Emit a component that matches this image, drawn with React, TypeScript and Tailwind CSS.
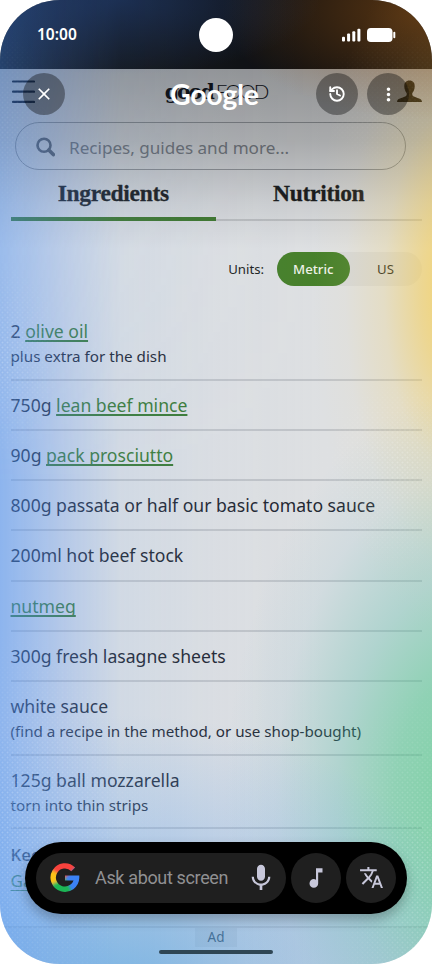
import { History } from 'lucide-react';
import { MdClose, MdMic, MdMoreVert, MdMusicNote, MdTranslate } from 'react-icons/md';
import { clsx } from 'clsx';

interface Ingredient {
  amount?: string;
  link?: string;
  text?: string;
  note?: string;
}

const ingredients: Ingredient[] = [
  { amount: '2', link: 'olive oil', note: 'plus extra for the dish' },
  { amount: '750g', link: 'lean beef mince' },
  { amount: '90g', link: 'pack prosciutto' },
  { text: '800g passata or half our basic tomato sauce' },
  { text: '200ml hot beef stock' },
  { link: 'nutmeg' },
  { text: '300g fresh lasagne sheets' },
  { text: 'white sauce', note: '(find a recipe in the method, or use shop-bought)' },
  { text: '125g ball mozzarella', note: 'torn into thin strips' },
];

function StatusBar() {
  return (
    <div className="flex h-[69px] shrink-0 items-center justify-between bg-[#0d0e10] pr-[36px] pl-[37px]">
      <span className="relative z-10 w-[69px] text-[15.5px] font-semibold text-white">10:00</span>
      <div className="relative z-10 h-[34px] w-[34px] rounded-full bg-white" />
      <div className="relative z-10 flex w-[71px] items-center justify-end gap-[6px]">
        <svg width="19" height="14" viewBox="0 0 19 14" fill="#fff">
          <rect x="0" y="8.8" width="3" height="4.7" rx="1" />
          <rect x="5.1" y="5.6" width="3" height="7.9" rx="1" />
          <rect x="10.3" y="3.3" width="3" height="10.2" rx="1" />
          <rect x="15.4" y="0.8" width="3" height="12.7" rx="1" />
        </svg>
        <svg width="29" height="14" viewBox="0 0 29 14" fill="#fff">
          <rect x="0" y="0" width="25.5" height="14" rx="3.8" />
          <rect x="26.3" y="3.8" width="2" height="6.4" rx="1" />
        </svg>
      </div>
    </div>
  );
}

function SiteHeader() {
  return (
    <header className="flex h-[53px] items-start justify-between pt-[10px] pr-[10px] pl-[12px]">
      <svg width="23" height="25" viewBox="0 0 23 25" stroke="#0c1424" strokeWidth="2.2" strokeLinecap="round">
        <path d="M1 2.5H22M1 12.7H22M1 22.9H22" />
      </svg>
      <div className="mt-[-2px] flex items-baseline leading-[28px] text-[#0c0e14]">
        <span className="font-['DejaVu_Serif'] text-[20.5px] font-bold tracking-[-2px]">good</span>
        <span className="ml-[3px] font-[Lato] text-[20.5px] font-light tracking-[-2px]">FOOD</span>
      </div>
      <svg width="25" height="23" viewBox="0 0 25 23" className="mt-px" fill="#262010">
        <path d="M12.5 0.5C16 0.5 18 3 17.7 6.5C17.6 9.5 16.4 12 15.3 13.2C15 15 15.6 16 17.5 16.8L22 18.4C24 19.1 24.8 20 25 22H0C0.2 20 1 19.1 3 18.4L7.5 16.8C9.4 16 10 15 9.7 13.2C8.6 12 7.4 9.5 7.3 6.5C7 3 9 0.5 12.5 0.5Z" />
      </svg>
    </header>
  );
}

function SearchField() {
  return (
    <div className="mr-[26px] ml-[15px] flex h-[48px] items-center rounded-full border border-[#989ca0] pl-[20px]">
      <svg width="19" height="20" viewBox="0 0 19 20" fill="none" stroke="#60666e" className="mt-px">
        <circle cx="8" cy="8.2" r="6.5" strokeWidth="2.6" />
        <path d="M12.8 13L17.3 17.6" strokeWidth="3.6" strokeLinecap="round" />
      </svg>
      <span className="mt-[3px] ml-[14px] text-[17.1px] text-[#7c8187]">Recipes, guides and more...</span>
    </div>
  );
}

function Tabs() {
  return (
    <div className="flex h-[50.5px] font-['Liberation_Serif',serif] text-[23.5px] leading-[47px] font-bold tracking-[-0.3px] text-[#1c1e20] [-webkit-text-stroke:0.3px_#1c1e20]">
      <div className="w-[205.5px] border-b-4 border-[#3f7a2c] text-center">Ingredients</div>
      <div className="flex-1 border-b-2 border-[#c1c3c5] text-center">Nutrition</div>
    </div>
  );
}

function UnitToggle() {
  return (
    <div className="mt-[31.5px] flex items-center justify-end text-[13.2px] text-[#1c1e20]">
      <span className="mt-px mr-[13px]">Units:</span>
      <div className="flex h-[34px] w-[144.5px] rounded-full bg-black/4 leading-[34px]">
        <span className="w-[72.5px] rounded-full bg-[#47802b] text-center font-medium text-[#eef2e8]">Metric</span>
        <span className="flex-1 text-center">US</span>
      </div>
    </div>
  );
}

function IngredientRow({ item, first }: { item: Ingredient; first?: boolean }) {
  return (
    <li className={clsx('border-b-2 border-[#c1c4c8] pt-[12px]', item.note ? 'h-[73.5px]' : 'h-[50.3px]', first && 'mt-[21px]')}>
      <p className="text-[17.6px] leading-[25px]">
        {item.amount && <span>{item.amount} </span>}
        {item.link && (
          <a className="text-[#3a7a30] underline decoration-[1.5px] underline-offset-[2px] [text-decoration-skip-ink:none]">{item.link}</a>
        )}
        {item.text}
      </p>
      {item.note && <p className="text-[15.2px] leading-[25px]">{item.note}</p>}
    </li>
  );
}

function Glow() {
  return (
    <div className="pointer-events-none absolute inset-0">
      {/* dark scrim behind the top controls */}
      <div className="absolute inset-x-0 top-[69px] h-[180px] bg-[linear-gradient(to_bottom,rgba(0,0,0,.34),rgba(0,0,0,.24)_40%,rgba(0,0,0,.08)_75%,transparent)]" />
      {/* blue, left */}
      <div className="absolute inset-0 bg-[linear-gradient(to_right,rgba(75,145,248,.55),rgba(90,150,248,.32)_14%,rgba(120,175,248,.12)_28%,rgba(150,185,245,.05)_50%,transparent_75%)] [mask-image:linear-gradient(to_bottom,rgba(0,0,0,.7),rgba(0,0,0,.85)_30%,#000_50%)]" />
      {/* yellow, top right */}
      <div className="absolute inset-0 bg-[radial-gradient(ellipse_150px_360px_at_462px_290px,rgba(255,205,50,.72),rgba(250,205,70,.5)_28%,rgba(250,210,95,.22)_52%,rgba(250,215,130,.06)_78%,transparent)]" />
      <div className="absolute inset-0 bg-[radial-gradient(ellipse_210px_110px_at_432px_10px,rgba(170,95,20,.5),transparent)]" />
      <div className="absolute inset-0 bg-[radial-gradient(ellipse_200px_75px_at_120px_0px,rgba(40,85,170,.35),transparent)]" />
      {/* green, bottom right */}
      <div className="absolute inset-0 bg-[radial-gradient(ellipse_250px_410px_at_475px_800px,rgba(60,200,120,.62),rgba(65,195,135,.5)_32%,rgba(75,185,165,.31)_55%,rgba(100,180,200,.1)_80%,transparent)]" />
      {/* blue, bottom */}
      <div className="absolute inset-0 bg-[radial-gradient(ellipse_360px_270px_at_130px_985px,rgba(60,155,230,.55),rgba(90,160,240,.28)_50%,transparent)]" />
      {/* halftone dots */}
      <div className="absolute inset-0 bg-[radial-gradient(circle,rgba(255,255,255,.26)_0.5px,transparent_1.3px),radial-gradient(circle,rgba(255,255,255,.26)_0.5px,transparent_1.3px)] bg-[length:5px_5px,5px_5px] bg-[position:0_0,2.5px_2.5px] [mask-image:radial-gradient(ellipse_150px_200px_at_20px_820px,#000,transparent),radial-gradient(ellipse_70px_110px_at_0px_360px,#000,transparent),radial-gradient(ellipse_90px_110px_at_400px_470px,#000,transparent),radial-gradient(ellipse_100px_200px_at_420px_870px,#000,transparent),radial-gradient(ellipse_100px_90px_at_400px_110px,rgba(0,0,0,.3),transparent),radial-gradient(ellipse_60px_110px_at_0px_130px,rgba(0,0,0,.4),transparent)]" />
    </div>
  );
}

function GoogleG() {
  return (
    <svg width="30" height="30" viewBox="0 0 30 30">
      <defs>
        <mask id="g-shape">
          <path d="M23.2 6.3A11.7 11.7 0 1 0 26.6 15" fill="none" stroke="#fff" strokeWidth="5.4" />
          <path d="M15 12.4H29.3V15H26.6V17.6H15Z" fill="#fff" />
        </mask>
        <filter id="g-soft" x="-50%" y="-50%" width="200%" height="200%">
          <feGaussianBlur stdDeviation="1.8" />
        </filter>
      </defs>
      <g mask="url(#g-shape)">
        <rect width="30" height="30" fill="#3b82f6" />
        <g filter="url(#g-soft)">
          <path d="M15 15L34 -4H-8L2 8Z" fill="#f8423c" />
          <path d="M15 15L2 7L-8 10V21L3 22Z" fill="#fcc419" />
          <path d="M15 15L2 21L-4 36H20L21 27Z" fill="#1fb655" />
        </g>
      </g>
    </svg>
  );
}

function TopControls() {
  const circle = 'absolute top-[73px] flex h-[42px] w-[42px] items-center justify-center rounded-full bg-black/36 text-white';
  return (
    <>
      <button className={clsx(circle, 'left-[23px]')}>
        <MdClose size={20} />
      </button>
      <span className="absolute top-[76.5px] left-[170px] font-[Lato] text-[28.5px] leading-[34px] font-bold tracking-[-0.3px] text-white">Google</span>
      <button className={clsx(circle, 'left-[316px]')}>
        <History size={18} strokeWidth={2.5} />
      </button>
      <button className={clsx(circle, 'left-[367px]')}>
        <MdMoreVert size={21} />
      </button>
    </>
  );
}

function AskBar() {
  return (
    <div className="absolute top-[842px] left-[25px] flex h-[71.5px] w-[382px] items-center gap-[5px] rounded-full bg-black px-[11px] text-[#c7c7da] shadow-[0_6px_12px_rgba(0,0,0,.25)]">
      <div className="flex h-[50px] w-[250px] items-center rounded-full bg-[#1f1f1f] pr-[9px] pl-[14px]">
        <GoogleG />
        <span className="ml-[15px] flex-1 font-[Roboto] text-[18px] tracking-[-0.35px] whitespace-nowrap text-[#909092]">Ask about screen</span>
        <MdMic size={32} />
      </div>
      <div className="flex h-[50px] w-[50px] items-center justify-center rounded-full bg-[#1f1f1f]">
        <MdMusicNote size={26} />
      </div>
      <div className="flex h-[50px] w-[50px] items-center justify-center rounded-full bg-[#1f1f1f]">
        <MdTranslate size={25} />
      </div>
    </div>
  );
}

export default function App() {
  return (
    <div className="relative flex h-[964px] w-[432px] flex-col overflow-hidden rounded-[60px] bg-[#dee0e2] font-['Noto_Sans',sans-serif] text-[#1f2630]">
      <StatusBar />
      <SiteHeader />
      <SearchField />
      <main className="flex flex-1 flex-col px-[10.5px]">
        <Tabs />
        <UnitToggle />
        <ul>
          {ingredients.map((item, index) => (
            <IngredientRow key={index} item={item} first={index === 0} />
          ))}
        </ul>
        <div className="pt-[12.5px] text-[17px] leading-[26px]">
          <p className="font-medium">Keep it healthy</p>
          <p>
            <a className="text-[#3a7a30] underline underline-offset-[3px]">Garlic</a>
          </p>
        </div>
      </main>
      <footer className="flex h-[38px] shrink-0 flex-col items-center border-t-2 border-black/8 bg-black/2">
        <span className="h-[19px] w-[42px] bg-black/5 text-center text-[13.5px] leading-[19px] text-[#40505c]">Ad</span>
        <span className="relative z-10 mt-[3px] h-[4px] w-[114px] rounded-full bg-[#2f4654]" />
      </footer>
      <Glow />
      <TopControls />
      <AskBar />
    </div>
  );
}
